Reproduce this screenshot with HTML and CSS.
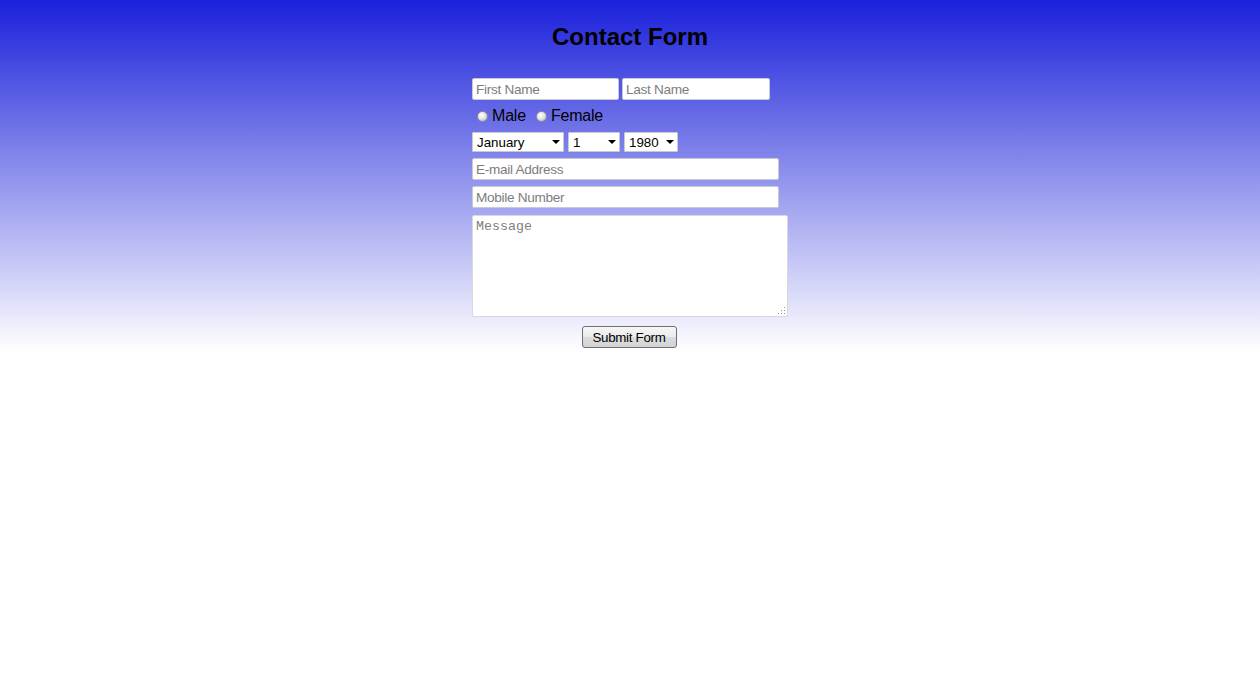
FILE: index.html
```html
<!DOCTYPE html>
<html lang="en">
<head>
<meta charset="utf-8">
<title>Contact Form</title>
<link rel="stylesheet" href="styles.css">
</head>
<body>
<div class="banner">
  <h1 class="title">Contact Form</h1>
  <form class="contact">
    <div class="row names">
      <input class="field name" type="text" placeholder="First Name">
      <input class="field name last" type="text" placeholder="Last Name">
    </div>
    <div class="row gender">
      <label class="choice"><input class="radio" type="radio" name="gender"> Male</label>
      <label class="choice"><input class="radio" type="radio" name="gender"> Female</label>
    </div>
    <div class="row dob">
      <span class="pick month"><select class="drop">
        <option>January</option><option>February</option><option>March</option><option>April</option>
        <option>May</option><option>June</option><option>July</option><option>August</option>
        <option>September</option><option>October</option><option>November</option><option>December</option>
      </select></span>
      <span class="pick day"><select class="drop">
        <option>1</option><option>2</option><option>3</option><option>4</option><option>5</option>
      </select></span>
      <span class="pick year"><select class="drop">
        <option>1980</option><option>1981</option><option>1982</option><option>1983</option>
      </select></span>
    </div>
    <input class="field wide email" type="text" placeholder="E-mail Address">
    <input class="field wide" type="text" placeholder="Mobile Number">
    <span class="note"><textarea class="message" placeholder="Message"></textarea></span>
    <div class="actions">
      <button class="submit" type="button">Submit Form</button>
    </div>
  </form>
</div>
</body>
</html>
```

FILE: styles.css
```css
html, body {
  margin: 0;
  padding: 0;
  background: #fff;
  font-family: "Liberation Sans", Arial, sans-serif;
}

.banner {
  height: 352px;
  background: linear-gradient(to bottom, #1a20db 0%, #8f92ec 50%, #ffffff 100%);
  display: flex;
  flex-direction: column;
  align-items: center;
}

.title {
  margin: 23px 0 0;
  font-size: 24px;
  line-height: 28px;
  font-weight: bold;
  color: #000;
}

.contact {
  width: 316px;
  margin-top: 27px;
  display: flex;
  flex-direction: column;
  align-items: flex-start;
}

.row {
  display: flex;
  align-items: center;
}

.field {
  box-sizing: border-box;
  height: 22px;
  padding: 0 3px;
  border: 1px solid #c9c9d4;
  border-radius: 2px;
  background: #fff;
  font-family: "Liberation Sans", Arial, sans-serif;
  font-size: 13.6px;
  letter-spacing: -0.3px;
  color: #000;
  outline: none;
}

.field::placeholder {
  color: #7d7d7d;
}

.name {
  width: 147px;
}

.name.last {
  width: 148px;
  margin-left: 3px;
}

.gender {
  margin-top: 6px;
  height: 20px;
  padding-left: 5px;
}

.choice {
  display: flex;
  align-items: center;
  font-size: 16px;
  color: #000;
  margin-right: 10px;
  letter-spacing: -0.2px;
}

.radio {
  appearance: none;
  -webkit-appearance: none;
  width: 11px;
  height: 11px;
  margin: 0 4px 0 0;
  border-radius: 50%;
  border: 1px solid #8e8e9a;
  box-sizing: border-box;
  background: radial-gradient(circle at 40% 35%, #ffffff 0%, #e6e6e6 45%, #a9a9a9 100%);
}

.dob {
  margin-top: 6px;
  gap: 4px;
}

.pick {
  position: relative;
  display: block;
  height: 20px;
}

.pick::after {
  content: "";
  position: absolute;
  right: 4px;
  top: 8px;
  border-left: 4px solid transparent;
  border-right: 4px solid transparent;
  border-top: 4px solid #000;
  pointer-events: none;
}

.drop {
  appearance: none;
  -webkit-appearance: none;
  box-sizing: border-box;
  width: 100%;
  height: 20px;
  padding: 0 0 0 4px;
  border: 1px solid #c9c9d4;
  border-radius: 1px;
  background: #fff;
  font-family: "Liberation Sans", Arial, sans-serif;
  font-size: 13.33px;
  color: #000;
}

.month { width: 92px; }
.day { width: 52px; }
.year { width: 54px; }

.wide {
  width: 307px;
  margin-top: 6px;
}

.note {
  position: relative;
  display: block;
  margin-top: 7px;
  height: 102px;
}

/* dotted resize grip in the lower-right corner */
.note::after {
  content: "";
  position: absolute;
  right: 3px;
  bottom: 3px;
  width: 8px;
  height: 8px;
  background:
    radial-gradient(circle, #9a9a9a 0.8px, transparent 1px) 6px 0 / 3px 3px no-repeat,
    radial-gradient(circle, #9a9a9a 0.8px, transparent 1px) 3px 3px / 3px 3px no-repeat,
    radial-gradient(circle, #9a9a9a 0.8px, transparent 1px) 6px 3px / 3px 3px no-repeat,
    radial-gradient(circle, #9a9a9a 0.8px, transparent 1px) 0 6px / 3px 3px no-repeat,
    radial-gradient(circle, #9a9a9a 0.8px, transparent 1px) 3px 6px / 3px 3px no-repeat,
    radial-gradient(circle, #9a9a9a 0.8px, transparent 1px) 6px 6px / 3px 3px no-repeat;
  pointer-events: none;
}

.message {
  display: block;
  box-sizing: border-box;
  width: 316px;
  height: 102px;
  margin: 0;
  padding: 3px 3px;
  border: 1px solid #d8d8e0;
  border-radius: 2px;
  background: #fff;
  font-family: "Liberation Mono", "Courier New", monospace;
  font-size: 13.33px;
  color: #000;
  resize: none;
  outline: none;
}

.message::placeholder {
  color: #808080;
}

.actions {
  width: 316px;
  display: flex;
  justify-content: center;
  margin-top: 9px;
}

.submit {
  box-sizing: border-box;
  width: 95px;
  height: 22px;
  margin-right: 2px;
  padding: 0;
  border: 1px solid #707070;
  border-radius: 3px;
  background: linear-gradient(to bottom, #f6f6f6 0%, #ebebeb 50%, #dcdcdc 51%, #d4d4d4 100%);
  font-family: "Liberation Sans", Arial, sans-serif;
  font-size: 13.33px;
  letter-spacing: -0.3px;
  color: #000;
}
```
